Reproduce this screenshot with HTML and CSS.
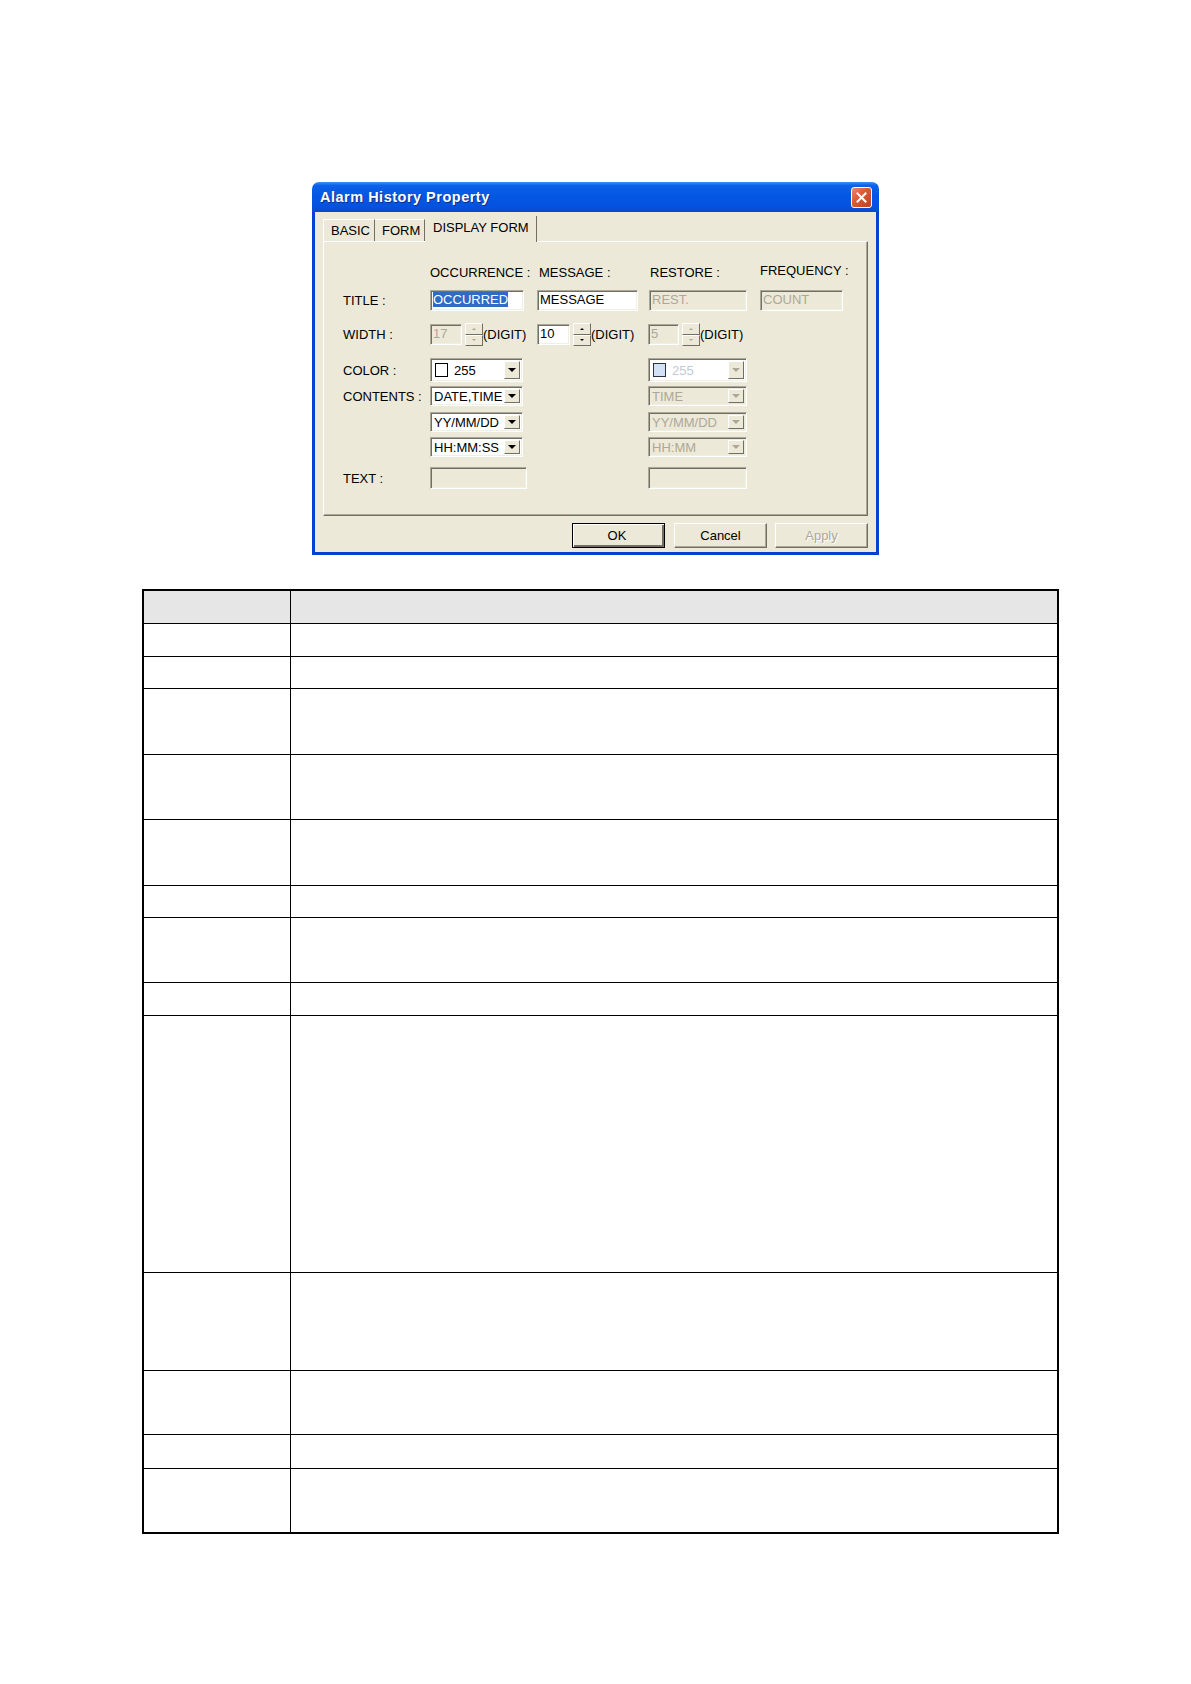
FILE: index.html
```html
<!DOCTYPE html>
<html>
<head>
<meta charset="utf-8">
<title>Alarm History Property</title>
<link rel="stylesheet" href="styles.css">
</head>
<body>
<div class="page">
  <div class="dialog">
    <div class="titlebar">
      <span class="title">Alarm History Property</span>
      <span class="close"><svg width="11" height="11" viewBox="0 0 11 11"><path d="M1.5 1.5 L9.5 9.5 M9.5 1.5 L1.5 9.5" stroke="#fff" stroke-width="2" stroke-linecap="square"/></svg></span>
    </div>
    <div class="dbody">
      <div class="tabs">
        <div class="tab t-basic">BASIC</div>
        <div class="tab t-form">FORM</div>
        <div class="tab t-display active">DISPLAY FORM</div>
      </div>
      <div class="panel">
        <div class="frow r-head">
          <span></span>
          <span class="colhead">OCCURRENCE :</span>
          <span class="colhead c2">MESSAGE :</span>
          <span class="colhead c3">RESTORE :</span>
          <span class="colhead c4 up">FREQUENCY :</span>
        </div>
        <div class="frow r-title">
          <span class="lbl">TITLE :</span>
          <span class="edit w94"><span class="sel">OCCURRED</span></span>
          <span class="edit w101">MESSAGE</span>
          <span class="edit w98 dis c3">REST.</span>
          <span class="edit w83 dis c4">COUNT</span>
        </div>
        <div class="frow r-width">
          <span class="lbl">WIDTH :</span>
          <span class="numgrp">
            <span class="edit w32 dis">17</span>
            <span class="spin dis"><span class="sb up"></span><span class="sb dn"></span></span>
            <span class="digit">(DIGIT)</span>
          </span>
          <span class="numgrp">
            <span class="edit w33">10</span>
            <span class="spin"><span class="sb up"></span><span class="sb dn"></span></span>
            <span class="digit">(DIGIT)</span>
          </span>
          <span class="numgrp c3n">
            <span class="edit w31 dis">5</span>
            <span class="spin dis"><span class="sb up"></span><span class="sb dn"></span></span>
            <span class="digit">(DIGIT)</span>
          </span>
          <span></span>
        </div>
        <div class="frow r-color">
          <span class="lbl">COLOR :</span>
          <span class="combo w93 tall"><span class="swatch"></span><span class="ctext">255</span><span class="arrow"></span></span>
          <span></span>
          <span class="combo w99 tall dis white c3n"><span class="swatch blue"></span><span class="ctext">255</span><span class="arrow"></span></span>
          <span></span>
        </div>
        <div class="frow r-cont">
          <span class="lbl">CONTENTS :</span>
          <span class="combo w93"><span class="ctext">DATE,TIME</span><span class="arrow"></span></span>
          <span></span>
          <span class="combo w99 dis c3n"><span class="ctext">TIME</span><span class="arrow"></span></span>
          <span></span>
        </div>
        <div class="frow r-yy">
          <span class="lbl"></span>
          <span class="combo w93"><span class="ctext">YY/MM/DD</span><span class="arrow"></span></span>
          <span></span>
          <span class="combo w99 dis c3n"><span class="ctext">YY/MM/DD</span><span class="arrow"></span></span>
          <span></span>
        </div>
        <div class="frow r-hh">
          <span class="lbl"></span>
          <span class="combo w93"><span class="ctext">HH:MM:SS</span><span class="arrow"></span></span>
          <span></span>
          <span class="combo w99 dis c3n"><span class="ctext">HH:MM</span><span class="arrow"></span></span>
          <span></span>
        </div>
        <div class="frow r-text">
          <span class="lbl">TEXT :</span>
          <span class="edit w97 dis tallbox"></span>
          <span></span>
          <span class="edit w99 dis tallbox c3n"></span>
          <span></span>
        </div>
      </div>
      <div class="buttons">
        <div class="btn default"><span>OK</span></div>
        <div class="btn"><span>Cancel</span></div>
        <div class="btn disabled"><span>Apply</span></div>
      </div>
    </div>
  </div>

  <table class="spec">
    <tr class="head h33"><td class="c1"></td><td></td></tr>
    <tr class="h33"><td class="c1"></td><td></td></tr>
    <tr class="h32"><td class="c1"></td><td></td></tr>
    <tr class="h66"><td class="c1"></td><td></td></tr>
    <tr class="h65"><td class="c1"></td><td></td></tr>
    <tr class="h66"><td class="c1"></td><td></td></tr>
    <tr class="h32"><td class="c1"></td><td></td></tr>
    <tr class="h65"><td class="c1"></td><td></td></tr>
    <tr class="h33"><td class="c1"></td><td></td></tr>
    <tr class="h257"><td class="c1"></td><td></td></tr>
    <tr class="h98"><td class="c1"></td><td></td></tr>
    <tr class="h64"><td class="c1"></td><td></td></tr>
    <tr class="h34"><td class="c1"></td><td></td></tr>
    <tr class="h65"><td class="c1"></td><td></td></tr>
  </table>
</div>
</body>
</html>
```
FILE: styles.css
```css
* { box-sizing: border-box; }
html, body { margin: 0; padding: 0; background: #fff; }
body { font-family: "Liberation Sans", Arial, sans-serif; }

.page { padding-top: 182px; padding-bottom: 150px; }

/* ---------- dialog ---------- */
.dialog {
  margin-left: 312px;
  width: 567px;
  height: 373px;
  display: flex;
  flex-direction: column;
}
.titlebar {
  height: 30px;
  flex: none;
  border-radius: 7px 7px 0 0;
  background: linear-gradient(#3d8df6 0%, #0b61ea 12%, #0457e3 45%, #0453e0 80%, #0a48cf 100%);
  display: flex;
  align-items: center;
  justify-content: space-between;
  padding: 0 7px 0 8px;
}
.title {
  color: #fff;
  font-weight: bold;
  font-size: 14.5px;
  letter-spacing: 0.5px;
  text-shadow: 1px 1px 0 #0a2d8a;
}
.close {
  width: 21px;
  height: 21px;
  border: 1px solid #fff;
  border-radius: 3px;
  background: linear-gradient(135deg, #ec8a6b 0%, #dd5a36 40%, #c5401e 100%);
  display: flex;
  align-items: center;
  justify-content: center;
  margin-top: 1px;
}
.close svg { display: block; }

.dbody {
  flex: 1;
  background: #ece9d8;
  border: 3px solid #0b3fd4;
  border-top: 0;
  padding: 4px 8px 0 8px;
  display: flex;
  flex-direction: column;
}

/* tabs */
.tabs {
  height: 25px;
  display: flex;
  align-items: flex-end;
  font-size: 13px;
  color: #000;
  position: relative;
  z-index: 1;
}
.tab {
  height: 22px;
  border-top: 1px solid #fff;
  border-left: 1px solid #fff;
  border-right: 1px solid #716f64;
  display: flex;
  align-items: center;
  padding: 0 0 0 7px;
  background: #ece9d8;
  white-space: nowrap;
}
.t-basic { width: 52px; }
.t-form { width: 50px; border-left: 0; padding-left: 7px; }
.t-display { width: 112px; }
.tab.active {
  height: 26px;
  margin-bottom: -1px;
  padding-left: 8px;
  padding-bottom: 4px;
  border-top: 0;
  border-left: 0;
}

.panel {
  height: 275px;
  border: 1px solid;
  border-color: #fff #716f64 #716f64 #fff;
  box-shadow: inset -1px -1px 0 #aca899;
  padding: 20px 0 0 19px;
  font-size: 13px;
  color: #000;
}

.frow {
  display: grid;
  grid-template-columns: 87px 107px 111px 112px 85px;
  align-items: center;
}
.r-head { height: 20px; }
.r-title { height: 21px; margin-top: 8px; }
.r-width { height: 23px; margin-top: 12px; }
.r-color { height: 24px; margin-top: 12px; }
.r-cont { height: 20px; margin-top: 4px; }
.r-yy { height: 20px; margin-top: 6px; }
.r-hh { height: 20px; margin-top: 5px; }
.r-text { height: 22px; margin-top: 10px; }

.colhead { white-space: nowrap; }
.colhead.c2 { padding-left: 2px; }
.colhead.c3 { padding-left: 1px; }
.colhead.up { position: relative; top: -2px; }
.lbl { white-space: nowrap; }

.c3 { margin-left: 1px; }
.c3n { margin-left: 0; }

/* edit boxes */
.edit {
  display: block;
  height: 21px;
  background: #fff;
  border: 1px solid;
  border-color: #aca899 #fff #fff #aca899;
  box-shadow: inset 1px 1px 0 #716f64, inset -1px -1px 0 #f1efe2;
  padding: 1px 0 0 2px;
  line-height: 16px;
  white-space: nowrap;
  overflow: hidden;
}
.edit.dis { background: #ece9d8; color: #aca899; }
.edit.tallbox { height: 22px; }
.w94 { width: 94px; }
.w101 { width: 101px; }
.w98 { width: 98px; }
.w83 { width: 83px; }
.w32 { width: 32px; }
.w33 { width: 33px; }
.w31 { width: 31px; }
.w93 { width: 93px; }
.w97 { width: 97px; }
.w99 { width: 99px; }

.sel { background: #316ac5; color: #fff; }

/* spinners */
.numgrp { display: flex; align-items: center; }
.numgrp .edit { height: 21px; }
.spin {
  width: 18px;
  height: 23px;
  margin-left: 3px;
  display: flex;
  flex-direction: column;
}
.sb {
  flex: 1;
  border: 1px solid;
  border-color: #fff #716f64 #716f64 #fff;
  background: #ece9d8;
  position: relative;
}
.sb::after {
  content: "";
  position: absolute;
  left: 50%;
  top: 50%;
  margin-left: -2px;
  border-left: 2px solid transparent;
  border-right: 2px solid transparent;
}
.sb.up::after { margin-top: -1px; border-bottom: 2px solid #000; }
.sb.dn::after { margin-top: -1px; border-top: 2px solid #000; }
.spin.dis .sb.up::after { border-bottom-color: #aca899; }
.spin.dis .sb.dn::after { border-top-color: #aca899; }
.digit { margin-left: 0; white-space: nowrap; }

/* combos */
.combo {
  display: flex;
  align-items: center;
  height: 20px;
  background: #fff;
  border: 1px solid;
  border-color: #aca899 #fff #fff #aca899;
  box-shadow: inset 1px 1px 0 #716f64, inset -1px -1px 0 #f1efe2;
  padding: 2px 2px 2px 3px;
  white-space: nowrap;
  overflow: hidden;
}
.combo.tall { height: 24px; }
.combo.dis { background: #ece9d8; color: #aca899; }
.combo.dis.white { background: #fff; color: #c3c9d6; }
.ctext { flex: 1; overflow: hidden; line-height: 15px; }
.swatch {
  width: 13px;
  height: 14px;
  border: 1px solid #000;
  background: #fff;
  margin: 0 6px 0 1px;
  flex: none;
}
.swatch.blue { background: #d3e1f5; border-color: #2c3140; }
.arrow {
  flex: none;
  width: 16px;
  height: 100%;
  border: 1px solid;
  border-color: #fff #716f64 #716f64 #fff;
  background: #ece9d8;
  position: relative;
}
.arrow::after {
  content: "";
  position: absolute;
  left: 50%;
  top: 50%;
  margin-left: -4px;
  margin-top: -2px;
  border-left: 4px solid transparent;
  border-right: 4px solid transparent;
  border-top: 4px solid #000;
}
.combo.dis .arrow::after { border-top-color: #aca899; }

/* buttons */
.buttons {
  margin-top: 7px;
  display: flex;
  justify-content: flex-end;
  gap: 9px;
  font-size: 13px;
}
.btn {
  width: 93px;
  height: 25px;
  border: 1px solid;
  border-color: #fff #716f64 #716f64 #fff;
  box-shadow: inset -1px -1px 0 #aca899;
  display: flex;
  align-items: center;
  justify-content: center;
  color: #000;
}
.btn.default {
  border: 1px solid #000;
  box-shadow: inset 1px 1px 0 #fff, inset -2px -2px 0 #716f64;
}
.btn.default span { margin-left: -3px; }
.btn.disabled { color: #aca899; text-shadow: 1px 1px 0 #fff; }
.btn + .btn + .btn { margin-left: -1px; }

/* ---------- table ---------- */
.spec {
  margin-top: 34px;
  margin-left: 142px;
  width: 917px;
  border-collapse: collapse;
  border: 2px solid #000;
}
.spec td {
  border: 1px solid #000;
  padding: 0;
}
.spec td.c1 { width: 147px; }
.spec tr.head td { background: #e6e6e6; }
.h32 { height: 32px; }
.h33 { height: 33px; }
.h34 { height: 34px; }
.h64 { height: 64px; }
.h65 { height: 65px; }
.h66 { height: 66px; }
.h98 { height: 98px; }
.h257 { height: 257px; }
```
